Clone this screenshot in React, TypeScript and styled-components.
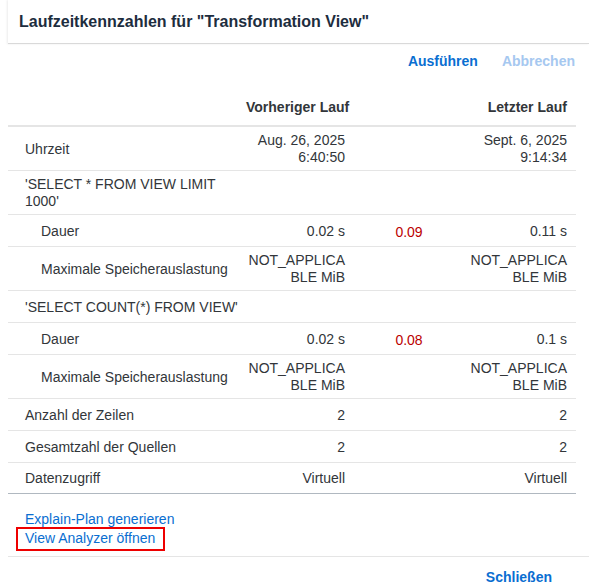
import React from "react";
import styled, { createGlobalStyle } from "styled-components";

const GlobalStyle = createGlobalStyle`
  html, body { margin: 0; padding: 0; background: #ffffff; }
  body { font-family: "Liberation Sans", Arial, sans-serif; color: #32363a; }
`;

const Page = styled.div`
  padding-left: 8px;
  height: 586px;
  overflow: hidden;
`;

const Dialog = styled.div`
  width: 581px;
  background: #ffffff;
  display: flex;
  flex-direction: column;
`;

const Header = styled.header`
  height: 43px;
  display: flex;
  align-items: center;
  padding: 0 11px;
  border-bottom: 1px solid #d9d9d9;
  box-shadow: -1px 0 2px rgba(0, 0, 0, 0.08);
`;

const Title = styled.h1`
  margin: 0;
  font-size: 16px;
  font-weight: 700;
  color: #1d2d3e;
`;

const Toolbar = styled.div`
  height: 34px;
  display: flex;
  align-items: center;
  justify-content: flex-end;
  gap: 24px;
  padding-right: 14px;
`;

const ToolButton = styled.button<{ $disabled?: boolean }>`
  border: none;
  background: none;
  padding: 0;
  font-family: inherit;
  font-size: 14px;
  font-weight: 700;
  color: ${(p) => (p.$disabled ? "#a6c8f0" : "#0a6ed1")};
  cursor: ${(p) => (p.$disabled ? "default" : "pointer")};
`;

const Table = styled.table`
  margin-top: 12px;
  width: 568px;
  table-layout: fixed;
  border-collapse: separate;
  border-spacing: 0;
  font-size: 14px;
  line-height: 17px;
`;

const HeadCell = styled.th<{ $align?: string }>`
  height: 37px;
  box-sizing: border-box;
  padding: 0 9px 0 4px;
  text-align: ${(p) => p.$align || "left"};
  font-weight: 700;
  color: #32363a;
  white-space: nowrap;
  border-bottom: 2px solid #e5e5e5;
  vertical-align: middle;
`;

const Row = styled.tr`
  height: 32px;
  & > td { border-bottom: 1px solid #e5e5e5; }
  &:last-child { height: 31px; }
  &:last-child > td { border-bottom: 1px solid #b0b8c0; }
`;

const LabelCell = styled.td<{ $indent?: boolean }>`
  padding: 5px 1px 4px ${(p) => (p.$indent ? "33px" : "17px")};
  color: #32363a;
  vertical-align: middle;
`;

const ValueCell = styled.td`
  padding: 5px 9px 4px 3px;
  text-align: right;
  color: #32363a;
  vertical-align: middle;
  word-break: break-all;
`;

const DiffCell = styled.td`
  padding: 7px 8px 3px;
  text-align: center;
  color: #bb0000;
  vertical-align: middle;
`;

const Links = styled.div`
  display: flex;
  flex-direction: column;
  align-items: flex-start;
  padding: 16px 0 8px 17px;
`;

const Link = styled.a<{ $highlight?: boolean }>`
  position: relative;
  font-size: 14px;
  line-height: 19px;
  color: #0a6ed1;
  text-decoration: none;
  cursor: pointer;
  ${(p) =>
    p.$highlight
      ? `&::after {
          content: "";
          position: absolute;
          left: -9px;
          right: -10px;
          top: -2px;
          bottom: -3px;
          border: 2px solid #ee0000;
        }`
      : ""}
`;

const Footer = styled.footer`
  border-top: 1px solid #e5e5e5;
  height: 40px;
  display: flex;
  align-items: center;
  justify-content: flex-end;
  padding-right: 37px;
`;

type RowData = {
  label: string;
  indent?: boolean;
  prev?: React.ReactNode;
  diff?: string;
  last?: React.ReactNode;
};

const rows: RowData[] = [
  { label: "Uhrzeit", prev: <>Aug. 26, 2025<br />6:40:50</>, last: <>Sept. 6, 2025<br />9:14:34</> },
  { label: "'SELECT * FROM VIEW LIMIT 1000'" },
  { label: "Dauer", indent: true, prev: "0.02 s", diff: "0.09", last: "0.11 s" },
  { label: "Maximale Speicherauslastung", indent: true, prev: "NOT_APPLICABLE MiB", last: "NOT_APPLICABLE MiB" },
  { label: "'SELECT COUNT(*) FROM VIEW'" },
  { label: "Dauer", indent: true, prev: "0.02 s", diff: "0.08", last: "0.1 s" },
  { label: "Maximale Speicherauslastung", indent: true, prev: "NOT_APPLICABLE MiB", last: "NOT_APPLICABLE MiB" },
  { label: "Anzahl der Zeilen", prev: "2", last: "2" },
  { label: "Gesamtzahl der Quellen", prev: "2", last: "2" },
  { label: "Datenzugriff", prev: "Virtuell", last: "Virtuell" },
];

export default function App() {
  return (
    <>
      <GlobalStyle />
      <Page>
        <Dialog>
          <Header>
            <Title>Laufzeitkennzahlen für "Transformation View"</Title>
          </Header>
          <Toolbar>
            <ToolButton>Ausführen</ToolButton>
            <ToolButton $disabled>Abbrechen</ToolButton>
          </Toolbar>
          <Table>
            <colgroup>
              <col style={{ width: 234 }} />
              <col style={{ width: 112 }} />
              <col style={{ width: 110 }} />
              <col style={{ width: 112 }} />
            </colgroup>
            <thead>
              <tr>
                <HeadCell />
                <HeadCell $align="right">Vorheriger Lauf</HeadCell>
                <HeadCell />
                <HeadCell $align="right">Letzter Lauf</HeadCell>
              </tr>
            </thead>
            <tbody>
              {rows.map((r, i) => (
                <Row key={i}>
                  <LabelCell $indent={r.indent}>{r.label}</LabelCell>
                  <ValueCell>{r.prev}</ValueCell>
                  <DiffCell>{r.diff}</DiffCell>
                  <ValueCell>{r.last}</ValueCell>
                </Row>
              ))}
            </tbody>
          </Table>
          <Links>
            <Link>Explain-Plan generieren</Link>
            <Link $highlight>View Analyzer öffnen</Link>
          </Links>
          <Footer>
            <ToolButton>Schließen</ToolButton>
          </Footer>
        </Dialog>
      </Page>
    </>
  );
}
